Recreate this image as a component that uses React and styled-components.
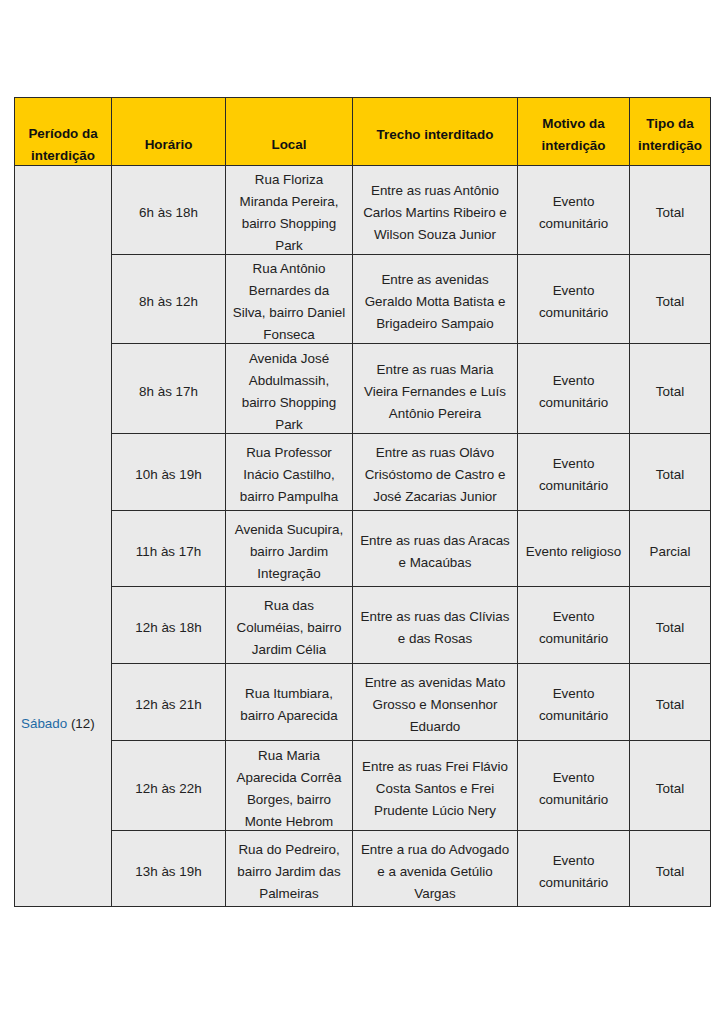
import styled, { createGlobalStyle } from "styled-components";

const GlobalStyle = createGlobalStyle`
  html, body {
    margin: 0;
    padding: 0;
    background: #fff;
  }
  body {
    font-family: "Liberation Sans", Arial, sans-serif;
  }
`;

const rows = [
  {
    h: 89,
    time: "6h às 18h",
    local: ["Rua Floriza", "Miranda Pereira,", "bairro Shopping", "Park"],
    trecho: ["Entre as ruas Antônio", "Carlos Martins Ribeiro e", "Wilson Souza Junior"],
    motivo: ["Evento", "comunitário"],
    tipo: "Total",
  },
  {
    h: 89,
    time: "8h às 12h",
    local: ["Rua Antônio", "Bernardes da", "Silva, bairro Daniel", "Fonseca"],
    trecho: ["Entre as avenidas", "Geraldo Motta Batista e", "Brigadeiro Sampaio"],
    motivo: ["Evento", "comunitário"],
    tipo: "Total",
  },
  {
    h: 90,
    time: "8h às 17h",
    local: ["Avenida José", "Abdulmassih,", "bairro Shopping", "Park"],
    trecho: ["Entre as ruas Maria", "Vieira Fernandes e Luís", "Antônio Pereira"],
    motivo: ["Evento", "comunitário"],
    tipo: "Total",
  },
  {
    h: 77,
    time: "10h às 19h",
    local: ["Rua Professor", "Inácio Castilho,", "bairro Pampulha"],
    trecho: ["Entre as ruas Olávo", "Crisóstomo de Castro e", "José Zacarias Junior"],
    motivo: ["Evento", "comunitário"],
    tipo: "Total",
  },
  {
    h: 76,
    time: "11h às 17h",
    local: ["Avenida Sucupira,", "bairro Jardim", "Integração"],
    trecho: ["Entre as ruas das Aracas", "e Macaúbas"],
    motivo: ["Evento religioso"],
    tipo: "Parcial",
  },
  {
    h: 77,
    time: "12h às 18h",
    local: ["Rua das", "Columéias, bairro", "Jardim Célia"],
    trecho: ["Entre as ruas das Clívias", "e das Rosas"],
    motivo: ["Evento", "comunitário"],
    tipo: "Total",
  },
  {
    h: 77,
    time: "12h às 21h",
    local: ["Rua Itumbiara,", "bairro Aparecida"],
    trecho: ["Entre as avenidas Mato", "Grosso e Monsenhor", "Eduardo"],
    motivo: ["Evento", "comunitário"],
    tipo: "Total",
  },
  {
    h: 90,
    time: "12h às 22h",
    local: ["Rua Maria", "Aparecida Corrêa", "Borges, bairro", "Monte Hebrom"],
    trecho: ["Entre as ruas Frei Flávio", "Costa Santos e Frei", "Prudente Lúcio Nery"],
    motivo: ["Evento", "comunitário"],
    tipo: "Total",
  },
  {
    h: 76,
    time: "13h às 19h",
    local: ["Rua do Pedreiro,", "bairro Jardim das", "Palmeiras"],
    trecho: ["Entre a rua do Advogado", "e a avenida Getúlio", "Vargas"],
    motivo: ["Evento", "comunitário"],
    tipo: "Total",
  },
];

const Lines = ({ items }) => (
  <Inner>
    {items.map((t, i) => (
      <span key={i}>
        {t}
        {i < items.length - 1 && <br />}
      </span>
    ))}
  </Inner>
);

const App = () => {
  return (
    <Page>
      <GlobalStyle />
      <Table>
        <colgroup>
          <col style={{ width: 97 }} />
          <col style={{ width: 114 }} />
          <col style={{ width: 127 }} />
          <col style={{ width: 165 }} />
          <col style={{ width: 112 }} />
          <col style={{ width: 81 }} />
        </colgroup>
        <thead>
          <HeadRow>
            <Th $low>
              <Lines items={["Período da", "interdição"]} />
            </Th>
            <Th $low>
              <Lines items={["Horário"]} />
            </Th>
            <Th $low>
              <Lines items={["Local"]} />
            </Th>
            <Th>
              <Lines items={["Trecho interditado"]} />
            </Th>
            <Th>
              <Lines items={["Motivo da", "interdição"]} />
            </Th>
            <Th>
              <Lines items={["Tipo da", "interdição"]} />
            </Th>
          </HeadRow>
        </thead>
        <tbody>
          {rows.map((r, i) => (
            <Row key={i} $h={r.h}>
              {i === 0 && (
                <DayCell rowSpan={rows.length}>
                  <Day>Sábado</Day> (12)
                </DayCell>
              )}
              <Td>
                <Lines items={[r.time]} />
              </Td>
              <Td>
                <Lines items={r.local} />
              </Td>
              <Td>
                <Lines items={r.trecho} />
              </Td>
              <Td>
                <Lines items={r.motivo} />
              </Td>
              <Td>
                <Lines items={[r.tipo]} />
              </Td>
            </Row>
          ))}
        </tbody>
      </Table>
    </Page>
  );
};

const Page = styled.div`
  width: 724px;
  height: 1024px;
  padding: 97px 0 0 14px;
  box-sizing: border-box;
  background: #fff;
`;

const Table = styled.table`
  border-collapse: collapse;
  table-layout: fixed;
  width: 696px;
  font-size: 13.4px;
  color: #222;
  border: 1.5px solid #333;

  td,
  th {
    border: 1px solid #2a2a2a;
  }
`;

const Inner = styled.div`
  margin: 3px 0 -3px;
`;

const HeadRow = styled.tr`
  height: 68px;
  background: #ffcc00;
`;

const Th = styled.th`
  font-weight: bold;
  color: #111;
  line-height: 22px;
  text-align: center;
  vertical-align: middle;
  padding: ${(p) => (p.$low ? "21px 4px 0" : "0 4px")};
`;

const Row = styled.tr`
  height: ${(p) => p.$h}px;
  background: #eaeaea;
`;

const Td = styled.td`
  text-align: center;
  vertical-align: middle;
  line-height: 22px;
  padding: 0 3px;
  white-space: nowrap;
`;

const DayCell = styled.td`
  text-align: left;
  vertical-align: bottom;
  line-height: 22px;
  padding: 0 6px 171px;
`;

const Day = styled.span`
  color: #1f6aa5;
`;

export default App;
